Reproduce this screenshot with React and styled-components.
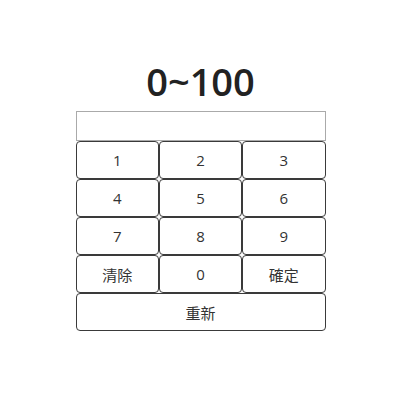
import React, { useState } from "react";
import styled, { createGlobalStyle } from "styled-components";

const Global = createGlobalStyle`
  html, body { margin: 0; padding: 0; background: #fff; }
  body { font-family: "Open Sans", "Noto Sans CJK TC", sans-serif; color: #222; }
`;

const Wrap = styled.div`
  width: 250px;
  margin: 0 auto;
  padding-top: 57px;
  display: flex;
  flex-direction: column;
`;

const Title = styled.h1`
  margin: 0 0 6px;
  height: 48px;
  line-height: 48px;
  text-align: center;
  font-family: "Open Sans", sans-serif;
  font-weight: 600;
  font-size: 38px;
  color: #222;
`;

const Display = styled.input`
  box-sizing: border-box;
  width: 250px;
  height: 30px;
  margin: 0;
  border: 1px solid #aaa;
  padding: 0 6px;
  font-size: 16px;
  outline: none;
`;

const Pad = styled.div`
  display: grid;
  grid-template-columns: repeat(3, 1fr);
  grid-auto-rows: 38px;
`;

const Key = styled.button`
  box-sizing: border-box;
  grid-column: ${(p) => (p.$wide ? "1 / span 3" : "auto")};
  margin: 0;
  background: #fff;
  border: 1px solid #3a3a3a;
  border-radius: 4px;
  font-family: "Open Sans", "Noto Sans CJK TC", sans-serif;
  font-size: 15px;
  color: #333;
  cursor: pointer;
  padding: 0;
`;

const keys = ["1", "2", "3", "4", "5", "6", "7", "8", "9", "清除", "0", "確定"];

export default function App() {
  const [val, setVal] = useState("");
  return (
    <>
      <Global />
      <Wrap>
        <Title>0~100</Title>
        <Display value={val} readOnly />
        <Pad>
          {keys.map((k) => (
            <Key
              key={k}
              onClick={() => {
                if (k === "清除") setVal("");
                else if (k === "確定") {}
                else setVal((v) => v + k);
              }}
            >
              {k}
            </Key>
          ))}
          <Key $wide onClick={() => setVal("")}>重新</Key>
        </Pad>
      </Wrap>
    </>
  );
}
